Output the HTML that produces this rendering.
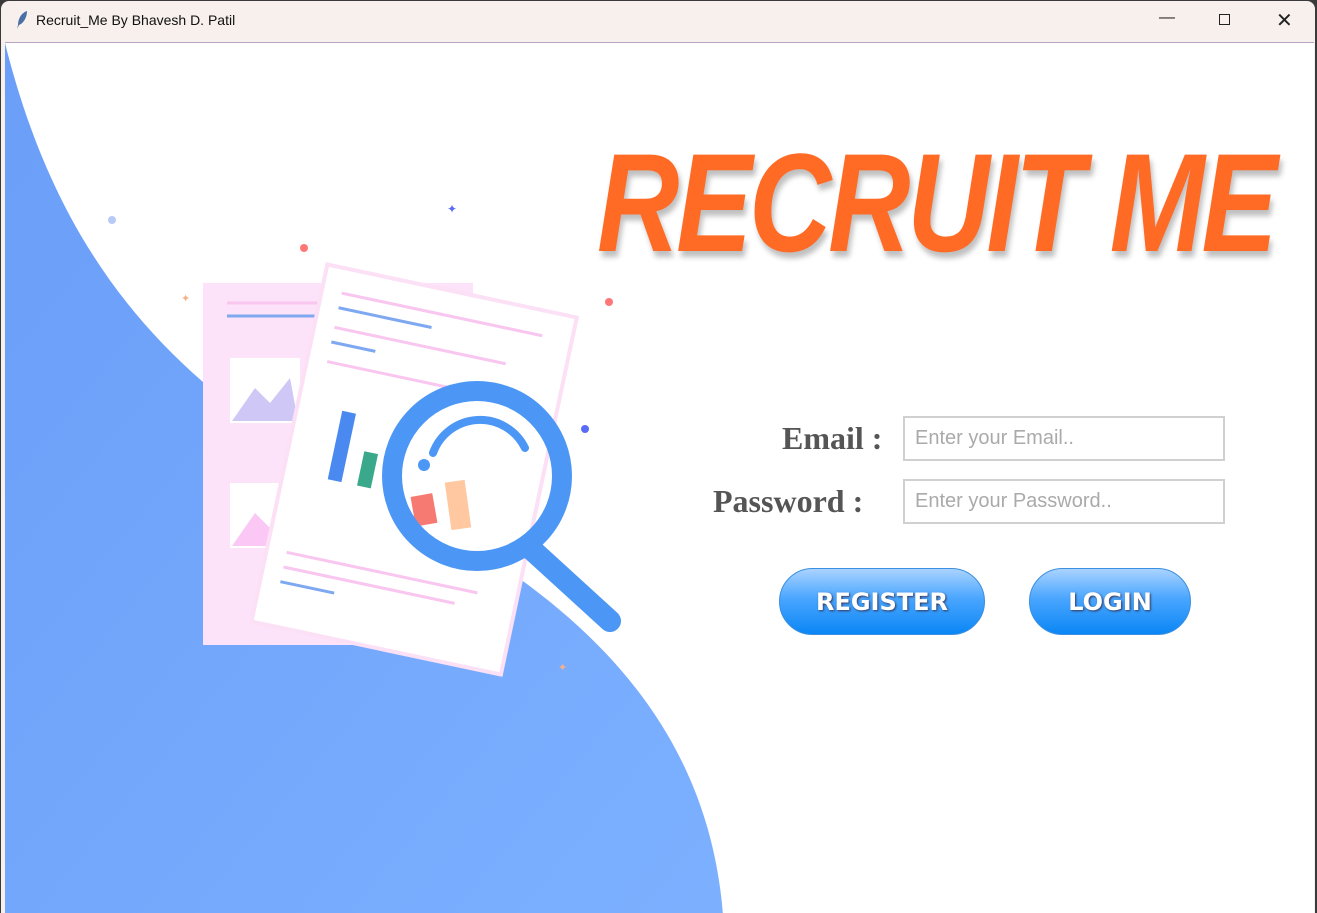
<!DOCTYPE html>
<html><head><style>
*{margin:0;padding:0;box-sizing:border-box}
body{width:1317px;height:913px;overflow:hidden;background:#3a3a3a;font-family:"Liberation Sans",sans-serif;position:relative}
.win{position:absolute;left:1px;top:1px;width:1314px;height:912px;background:#f7f0ec;border-radius:8px 8px 0 0;overflow:hidden}
.title{position:absolute;left:35px;top:11px;font-size:14px;color:#111}
.ctl{position:absolute;top:8px;font-size:16px;color:#222}
.content{position:absolute;left:4px;top:41px;width:1309px;height:872px;background:#fff;border-top:1px solid #b9a3c4;overflow:hidden}
.logo{position:absolute;left:592px;top:90px;font-size:140px;line-height:1;font-weight:bold;font-style:italic;color:#ff6a25;transform:scaleX(0.815);transform-origin:left top;letter-spacing:-4px;text-shadow:3px 6px 6px rgba(0,0,0,0.25);white-space:nowrap;font-family:"Liberation Sans",sans-serif}
.lbl{position:absolute;font-family:"Liberation Serif",serif;font-weight:bold;font-size:32px;color:#555}
.inp{position:absolute;left:898px;width:322px;height:45px;border:2px solid #d0d0d0;font-size:20px;color:#aaa;padding:9px 10px;background:#fff}
.btn{position:absolute;top:525px;height:67px;border-radius:34px;background:linear-gradient(#aad3ff,#4aa6ff 45%,#0a86f5);border:1px solid #3a8fe0;color:#fff;font-family:"Comic Sans MS","DejaVu Sans",sans-serif;font-weight:bold;font-size:24px;text-align:center;line-height:66px;text-shadow:1px 1px 2px #335}
</style></head><body>
<div class="win">
<svg style="position:absolute;left:14px;top:9px" width="14" height="20" viewBox="0 0 14 20"><path d="M12 1 C6 3 3 9 3 15 L2 19 L4 15 C9 13 12 7 12 1Z" fill="#4a6fa5"/></svg>
<div class="title">Recruit_Me By Bhavesh D. Patil</div>
<div class="ctl" style="left:1158px">&#8212;</div>
<div style="position:absolute;left:1218px;top:13px;width:11px;height:11px;border:1.5px solid #222"></div>
<div class="ctl" style="left:1275px;top:7px;font-size:20px">&#10005;</div>
<div class="content">
<svg width="1309" height="872" style="position:absolute;left:0;top:0">
<defs><linearGradient id="g" x1="0" y1="0" x2="1" y2="1"><stop offset="0" stop-color="#6a9ef8"/><stop offset="1" stop-color="#7cb0ff"/></linearGradient></defs>
<path d="M0,0 C50,200 150,330 330,430 C520,520 700,640 718,872 L0,872 Z" fill="url(#g)"/>
<rect x="198" y="240" width="270" height="362" fill="#fde3f9"/>
<line x1="222" y1="260" x2="440" y2="260" stroke="#f9c6f0" stroke-width="3"/>
<line x1="222" y1="273" x2="320" y2="273" stroke="#7ea8f0" stroke-width="3"/>
<rect x="225" y="315" width="70" height="65" fill="#fff"/><path d="M227 378 L250 345 L265 360 L285 335 L293 378Z" fill="#cfc8f7"/>
<rect x="225" y="440" width="70" height="65" fill="#fff"/><path d="M227 503 L250 470 L265 485 L285 460 L293 503Z" fill="#fbc8f5"/>
<g transform="translate(-8,-12) rotate(12 410 460)"><rect x="285" y="255" width="255" height="365" fill="#fff" stroke="#fbe0f6" stroke-width="4"/>
<line x1="305" y1="280" x2="510" y2="280" stroke="#f9c6f0" stroke-width="3"/>
<line x1="305" y1="295" x2="400" y2="295" stroke="#7ea8f0" stroke-width="3"/>
<line x1="305" y1="315" x2="480" y2="315" stroke="#f9c6f0" stroke-width="3"/>
<line x1="305" y1="330" x2="350" y2="330" stroke="#7ea8f0" stroke-width="3"/>
<line x1="305" y1="350" x2="490" y2="350" stroke="#f9c6f0" stroke-width="3"/>
<rect x="330" y="395" width="14" height="70" fill="#4a8af0"/><rect x="360" y="430" width="14" height="35" fill="#3aa88a"/>
<line x1="305" y1="545" x2="500" y2="545" stroke="#f9c6f0" stroke-width="3"/>
<line x1="305" y1="560" x2="480" y2="560" stroke="#f9c6f0" stroke-width="3"/>
<line x1="305" y1="575" x2="360" y2="575" stroke="#7ea8f0" stroke-width="3"/></g>
<rect x="408" y="452" width="22" height="30" fill="#f77a72" transform="rotate(-10 418 467)"/>
<rect x="443" y="438" width="20" height="48" fill="#ffc8a0" transform="rotate(-8 453 462)"/>
<line x1="525" y1="505" x2="605" y2="578" stroke="#4c97f5" stroke-width="22" stroke-linecap="round"/>
<circle cx="472" cy="433" r="85" fill="none" stroke="#4c97f5" stroke-width="20"/>
<path d="M428 410 A50 50 0 0 1 520 405" fill="none" stroke="#4c97f5" stroke-width="8" stroke-linecap="round"/>
<circle cx="419" cy="422" r="6" fill="#4c97f5"/>
<circle cx="107" cy="177" r="4" fill="#b9c9f5"/><circle cx="299" cy="205" r="4" fill="#f77"/><circle cx="604" cy="259" r="4" fill="#f77"/><circle cx="580" cy="386" r="4" fill="#5a6cf5"/>
<text x="442" y="170" fill="#5a6cf5" font-size="12">✦</text><text x="176" y="259" fill="#f9b08a" font-size="11">✦</text><text x="553" y="628" fill="#f9b08a" font-size="11">✦</text>
</svg>
<div class="logo">RECRUIT ME</div>
<div class="lbl" style="left:777px;top:377px">Email :</div>
<div class="lbl" style="left:708px;top:440px">Password :</div>
<div class="inp" style="top:373px">Enter your Email..</div>
<div class="inp" style="top:436px">Enter your Password..</div>
<div class="btn" style="left:774px;width:206px">REGISTER</div>
<div class="btn" style="left:1024px;width:162px">LOGIN</div>
</div></div>
</body></html>
